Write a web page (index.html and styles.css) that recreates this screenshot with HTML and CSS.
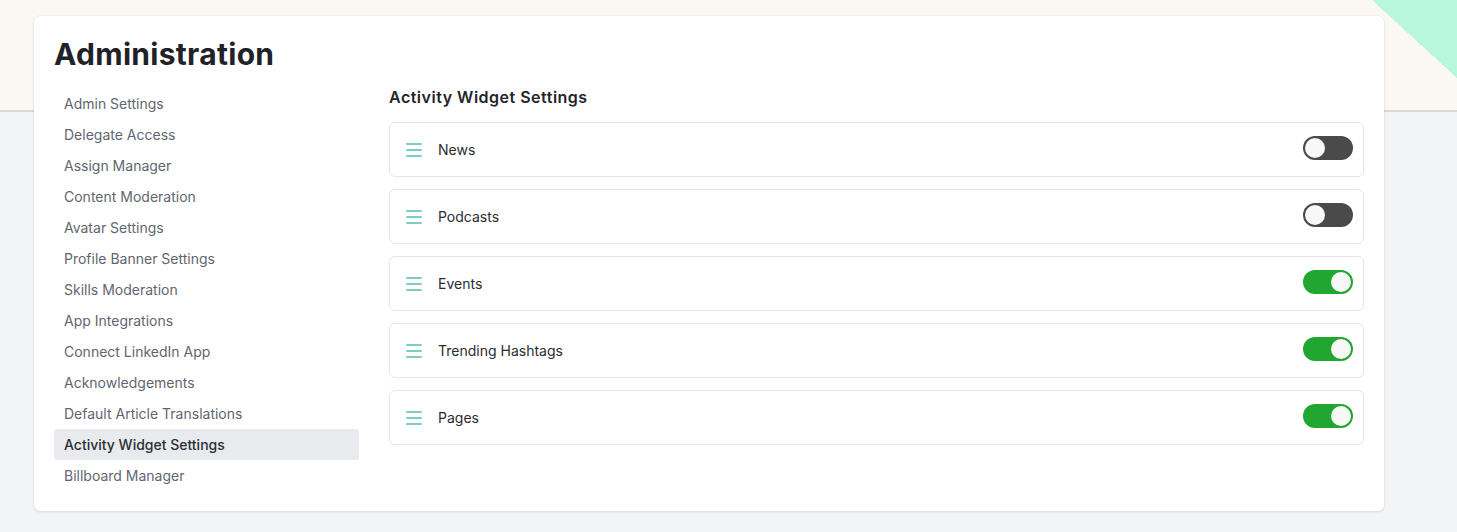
FILE: index.html
```html
<!DOCTYPE html>
<html lang="en">
<head>
<meta charset="utf-8">
<title>Administration</title>
<link rel="stylesheet" href="styles.css">
</head>
<body>
<main class="page">
  <section class="card">
    <h1 class="title">Administration</h1>
    <div class="layout">
      <nav class="sidebar">
        <a class="nav-item">Admin Settings</a>
        <a class="nav-item">Delegate Access</a>
        <a class="nav-item">Assign Manager</a>
        <a class="nav-item">Content Moderation</a>
        <a class="nav-item">Avatar Settings</a>
        <a class="nav-item">Profile Banner Settings</a>
        <a class="nav-item">Skills Moderation</a>
        <a class="nav-item">App Integrations</a>
        <a class="nav-item">Connect LinkedIn App</a>
        <a class="nav-item">Acknowledgements</a>
        <a class="nav-item">Default Article Translations</a>
        <a class="nav-item active">Activity Widget Settings</a>
        <a class="nav-item">Billboard Manager</a>
      </nav>
      <div class="content">
        <h2 class="heading">Activity Widget Settings</h2>
        <ul class="widget-list">
          <li class="widget">
            <span class="handle"><i></i><i></i><i></i></span>
            <span class="widget-name">News</span>
            <span class="toggle"><span class="knob"></span></span>
          </li>
          <li class="widget">
            <span class="handle"><i></i><i></i><i></i></span>
            <span class="widget-name">Podcasts</span>
            <span class="toggle"><span class="knob"></span></span>
          </li>
          <li class="widget">
            <span class="handle"><i></i><i></i><i></i></span>
            <span class="widget-name">Events</span>
            <span class="toggle on"><span class="knob"></span></span>
          </li>
          <li class="widget">
            <span class="handle"><i></i><i></i><i></i></span>
            <span class="widget-name">Trending Hashtags</span>
            <span class="toggle on"><span class="knob"></span></span>
          </li>
          <li class="widget">
            <span class="handle"><i></i><i></i><i></i></span>
            <span class="widget-name">Pages</span>
            <span class="toggle on"><span class="knob"></span></span>
          </li>
        </ul>
      </div>
    </div>
  </section>
</main>
</body>
</html>
```

FILE: styles.css
```css
* { box-sizing: border-box; }

html, body {
  margin: 0;
  padding: 0;
}

body {
  font-family: Inter, "Noto Sans", "Liberation Sans", sans-serif;
  color: #24272b;
  min-height: 532px;
  background:
    linear-gradient(to bottom left, #b9f7dc 50%, transparent 50%) top right / 85px 78px no-repeat,
    linear-gradient(to bottom, #fbf8f1 0, #fbf8f1 110px, #d6d6d6 110px, #dcdcdc 112px, #f3f4f6 112px) top left / 100% 100% no-repeat,
    #f3f4f6;
}

.page {
  padding: 16px 73px 0 34px;
}

.card {
  width: 1350px;
  background: #fff;
  border-radius: 6px;
  box-shadow: 0 1px 3px rgba(0, 0, 0, 0.1), 0 0 0 1px rgba(0, 0, 0, 0.02);
  padding: 20px 20px 20px 20px;
}

.title {
  margin: 0 0 16px;
  font-size: 30px;
  line-height: 36px;
  font-weight: 700;
  color: #1f2328;
  letter-spacing: 0.3px;
}

.layout {
  display: flex;
  gap: 30px;
}

.sidebar {
  width: 305px;
  display: flex;
  flex-direction: column;
}

.nav-item {
  display: block;
  height: 31px;
  line-height: 31px;
  padding-left: 10px;
  font-size: 14px;
  color: #5f6670;
  border-radius: 3px;
}

.nav-item.active {
  background: #e8eaed;
  color: #2b2e33;
  font-weight: 500;
}

.content {
  flex: 1;
}

.heading {
  margin: 0 0 16px;
  font-size: 16px;
  line-height: 18px;
  font-weight: 600;
  color: #222529;
  letter-spacing: 0.5px;
}

.widget-list {
  list-style: none;
  margin: 0;
  padding: 0;
  display: flex;
  flex-direction: column;
  gap: 12px;
}

.widget {
  height: 55px;
  border: 1px solid #e4e6e9;
  border-radius: 6px;
  display: flex;
  align-items: center;
  padding: 0 10px 0 16px;
}

.handle {
  width: 16px;
  display: flex;
  flex-direction: column;
  gap: 4px;
  margin-right: 16px;
  margin-top: 1px;
}

.handle i {
  display: block;
  height: 2px;
  background: #7ccfc0;
  border-radius: 1px;
}

.widget-name {
  flex: 1;
  font-size: 14px;
  color: #2a2c30;
}

.toggle {
  width: 50px;
  height: 24px;
  border-radius: 12px;
  background: #4a4a4a;
  display: flex;
  align-items: center;
  padding: 0 2px;
  margin-top: -3px;
}

.toggle.on {
  background: #21a631;
  justify-content: flex-end;
}

.knob {
  width: 20px;
  height: 20px;
  border-radius: 50%;
  background: #f8f8f8;
}
```
